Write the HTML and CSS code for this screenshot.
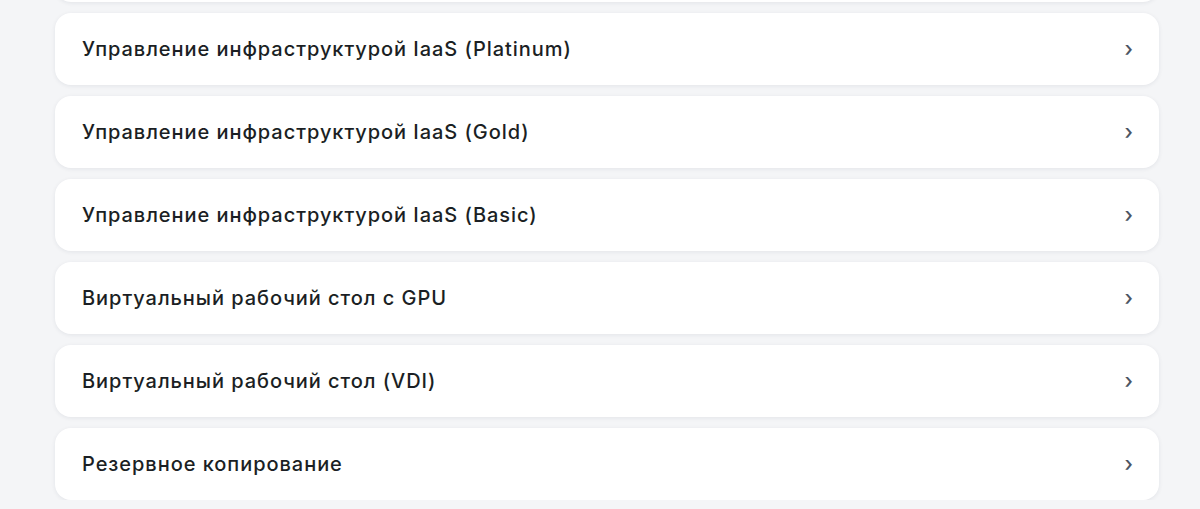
FILE: index.html
```html
<!DOCTYPE html>
<html lang="ru">
<head>
    <meta charset="UTF-8">
    <meta name="viewport" content="width=device-width, initial-scale=1.0">
    <title>Услуги</title>
    <link rel="stylesheet" href="styles.css">
</head>
<body>
    <ul class="service-list">
        <!-- previous item, scrolled out of view -->
        <li class="service-item"></li>
        <li class="service-item">
            <span class="service-name">Управление инфраструктурой IaaS (Platinum)</span>
            <span class="chevron">&#8250;</span>
        </li>
        <li class="service-item">
            <span class="service-name">Управление инфраструктурой IaaS (Gold)</span>
            <span class="chevron">&#8250;</span>
        </li>
        <li class="service-item">
            <span class="service-name">Управление инфраструктурой IaaS (Basic)</span>
            <span class="chevron">&#8250;</span>
        </li>
        <li class="service-item">
            <span class="service-name">Виртуальный рабочий стол с GPU</span>
            <span class="chevron">&#8250;</span>
        </li>
        <li class="service-item">
            <span class="service-name">Виртуальный рабочий стол (VDI)</span>
            <span class="chevron">&#8250;</span>
        </li>
        <li class="service-item">
            <span class="service-name">Резервное копирование</span>
            <span class="chevron">&#8250;</span>
        </li>
    </ul>
</body>
</html>
```

FILE: styles.css
```css
* {
    margin: 0;
    padding: 0;
    box-sizing: border-box;
}

body {
    background-color: #f4f5f7;
    font-family: "Inter", "Noto Sans", sans-serif;
    color: #1b1f24;
    overflow: hidden;
}

.service-list {
    list-style: none;
    display: flex;
    flex-direction: column;
    gap: 11px;
    margin: -70px 41px 0 55px;
}

.service-item {
    display: flex;
    justify-content: space-between;
    align-items: center;
    height: 72px;
    padding: 0 26px 0 27px;
    background-color: #ffffff;
    border-radius: 16px;
    box-shadow: 0 1px 4px rgba(30, 40, 60, 0.08);
    cursor: pointer;
}

.service-name {
    font-size: 20px;
    font-weight: 500;
    letter-spacing: 0.95px;
}

.chevron {
    font-size: 21px;
    font-weight: 500;
    color: #4b5563;
    line-height: 1;
    margin-top: -1px;
}
```
